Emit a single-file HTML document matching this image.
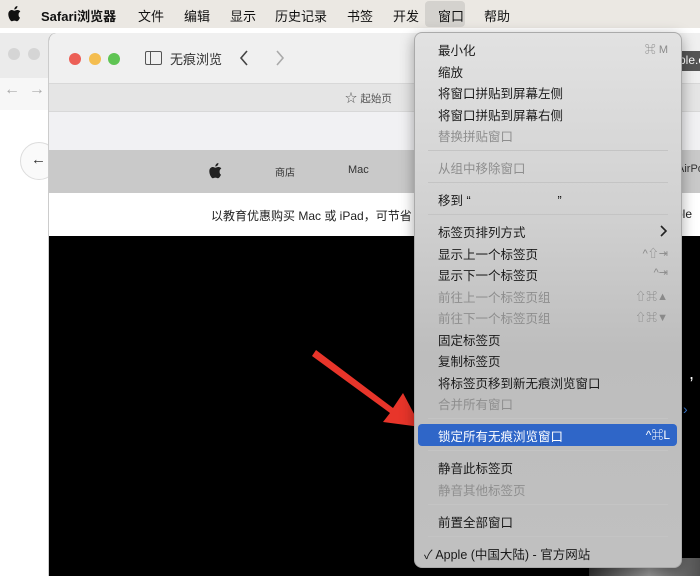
<!DOCTYPE html>
<html><head><meta charset="utf-8"><style>
*{margin:0;padding:0;box-sizing:border-box}
body{width:700px;height:576px;overflow:hidden;position:relative;background:#fff;font-family:"Liberation Sans","Noto Sans CJK SC",sans-serif;}
.abs{position:absolute}
#mb{left:0;top:0;width:700px;height:28px;background:#ebe8e3;font-size:13px;color:#111}
#mb span{position:absolute;top:6px}
.item{position:absolute;left:438px;font-size:12.5px;color:#1a1a1a;white-space:nowrap}
.dis{color:#8e8e8e}
.sc{position:absolute;right:32px;font-size:11px;color:#8a8a8a;white-space:nowrap;text-align:right}
.sep{position:absolute;left:428px;width:240px;height:1px;background:#c4c4c4}
</style></head><body>
<div id="mb" class="abs">
<svg class="abs" style="left:8px;top:6px" width="13" height="16" viewBox="0 0 13 16"><path d="M10.6 8.5c0-2 1.6-2.9 1.7-3-.9-1.4-2.4-1.5-2.9-1.5-1.2-.1-2.4.7-3 .7s-1.6-.7-2.6-.7C2.4 4 .3 5.2.3 8.2c0 2.9 2 7 3.6 7 .8 0 1.3-.6 2.5-.6s1.5.6 2.5.6c1.6 0 2.9-3 3.1-3.6-1.3-.5-1.4-2.1-1.4-3.1zM8.6 2.4C9.2 1.7 9.5.8 9.4 0c-.8 0-1.8.6-2.3 1.2-.5.6-.9 1.5-.8 2.3.9.1 1.8-.4 2.3-1.1z" fill="#111"/></svg>
<span style="left:41px;font-weight:bold">Safari浏览器</span>
<span style="left:138px">文件</span><span style="left:184px">编辑</span><span style="left:230px">显示</span>
<span style="left:275px">历史记录</span><span style="left:347px">书签</span><span style="left:393px">开发</span>
<div class="abs" style="left:425px;top:1px;width:40px;height:26px;background:#d4d2ce;border-radius:4px"></div>
<span style="left:438px">窗口</span><span style="left:484px">帮助</span>
</div>
<!-- back window -->
<div class="abs" style="left:0;top:33px;width:60px;height:45px;background:#ebebeb"></div>
<div class="abs" style="left:8px;top:48px;width:12px;height:12px;border-radius:6px;background:#d5d5d5"></div>
<div class="abs" style="left:28px;top:48px;width:12px;height:12px;border-radius:6px;background:#d5d5d5"></div>
<div class="abs" style="left:0;top:78px;width:60px;height:32px;background:#f7f7f7;color:#aaa;font-size:16px;padding:3px 4px">← &nbsp;→</div>
<div class="abs" style="left:20px;top:142px;width:38px;height:38px;border-radius:19px;border:1px solid #ddd;background:#fafafa;font-size:15px;padding:8px 10px;color:#333">←</div>
<!-- private window -->
<div class="abs" style="left:48px;top:33px;width:660px;height:543px;background:#000;border-radius:8px 8px 0 0;overflow:hidden;border-left:1px solid #ccc">
 <div class="abs" style="left:0;top:0;width:660px;height:50px;background:#f0f0f0"></div>
 <div class="abs" style="left:20px;top:20px;width:12px;height:12px;border-radius:6px;background:#ec5f56"></div>
 <div class="abs" style="left:40px;top:20px;width:12px;height:12px;border-radius:6px;background:#f4bd4f"></div>
 <div class="abs" style="left:59px;top:20px;width:12px;height:12px;border-radius:6px;background:#5fc453"></div>
 <div class="abs" style="left:96px;top:18px;width:17px;height:14px;border:1.3px solid #555;border-radius:2px"><div style="position:absolute;left:4px;top:0;width:1px;height:12px;background:#555"></div></div>
 <div class="abs" style="left:121px;top:16px;font-size:13px;color:#333">无痕浏览</div>
 <svg class="abs" style="left:190px;top:17px" width="10" height="16"><path d="M8 1 L2 8 L8 15" stroke="#444" stroke-width="1.6" fill="none"/></svg>
 <svg class="abs" style="left:226px;top:17px" width="10" height="16"><path d="M2 1 L8 8 L2 15" stroke="#aaa" stroke-width="1.6" fill="none"/></svg>
 <div class="abs" style="left:0;top:50px;width:660px;height:29px;background:#e5e5e5;border-top:1px solid #d8d8d8;border-bottom:1px solid #d8d8d8"></div>
 <div class="abs" style="left:296px;top:56px;font-size:12px;color:#555">☆ <span style="font-size:10.5px">起始页</span></div>
 <div class="abs" style="left:0;top:79px;width:660px;height:38px;background:#f1f1f3"></div>
 <div class="abs" style="left:0;top:117px;width:660px;height:43px;background:#c9c9c9"></div>
 <svg class="abs" style="left:160px;top:130px" width="13" height="16" viewBox="0 0 13 16"><path d="M10.6 8.5c0-2 1.6-2.9 1.7-3-.9-1.4-2.4-1.5-2.9-1.5-1.2-.1-2.4.7-3 .7s-1.6-.7-2.6-.7C2.4 4 .3 5.2.3 8.2c0 2.9 2 7 3.6 7 .8 0 1.3-.6 2.5-.6s1.5.6 2.5.6c1.6 0 2.9-3 3.1-3.6-1.3-.5-1.4-2.1-1.4-3.1zM8.6 2.4C9.2 1.7 9.5.8 9.4 0c-.8 0-1.8.6-2.3 1.2-.5.6-.9 1.5-.8 2.3.9.1 1.8-.4 2.3-1.1z" fill="#222"/></svg>
 <div class="abs" style="left:226px;top:131px;font-size:10px;color:#333">商店</div>
 <div class="abs" style="left:299px;top:131px;font-size:11px;color:#333">Mac</div>
 <div class="abs" style="left:0;top:160px;width:660px;height:43px;background:#fff"></div>
 <div class="abs" style="left:162px;top:174px;font-size:12px;color:#222">以教育优惠购买 Mac 或 iPad，可节省</div>
 <div class="abs" style="left:627px;top:174px;font-size:12px;color:#222">ple</div>
 <div class="abs" style="left:627px;top:18px;width:40px;height:20px;background:#555;color:#fff;font-size:12px;padding:2px 3px">ple.c</div>
 <div class="abs" style="left:628px;top:130px;font-size:11px;color:#333">AirPo</div>
 <div class="abs" style="left:640px;top:330px;font-size:18px;color:#fff">,</div>
 <div class="abs" style="left:634px;top:368px;font-size:14px;color:#3a7bd5">›</div>
 <div class="abs" style="left:540px;top:525px;width:120px;height:18px;background:linear-gradient(90deg,#333,#999,#444)"></div>
</div>
<!-- arrow -->
<svg class="abs" style="left:0;top:0" width="700" height="576"><path d="M312 356 L316 350 L393 408 L403 393 L421 427 L383 422 L390 413 Z" fill="#e8352a"/></svg>
<!-- menu -->
<div class="abs" style="left:414px;top:32px;width:268px;height:536px;border-radius:8px;background:linear-gradient(#e2e2e2,#d0d0d0 35%,#bdbdbd 60%,#c0c0c0);border:1px solid #aaa;box-shadow:0 4px 14px rgba(0,0,0,.35)"></div>
<div class="abs" style="left:418px;top:424px;width:259px;height:22px;border-radius:4px;background:#2f66c8"></div>
<div class="item" style="top:40px">最小化</div><div class="sc" style="top:41px">⌘ M</div>
<div class="item" style="top:62px">缩放</div>
<div class="item" style="top:83px">将窗口拼贴到屏幕左侧</div>
<div class="item" style="top:105px">将窗口拼贴到屏幕右侧</div>
<div class="item dis" style="top:126px">替换拼贴窗口</div>
<div class="sep" style="top:150px"></div>
<div class="item dis" style="top:158px">从组中移除窗口</div>
<div class="sep" style="top:182px"></div>
<div class="item" style="top:190px">移到 “ &nbsp; &nbsp; &nbsp; &nbsp; &nbsp; &nbsp; &nbsp; &nbsp; &nbsp; &nbsp; &nbsp; &nbsp; ”</div>
<div class="sep" style="top:214px"></div>
<div class="item" style="top:222px">标签页排列方式</div>
<svg class="abs" style="left:660px;top:225px" width="8" height="12"><path d="M1 1 L6 6 L1 11" stroke="#222" stroke-width="1.6" fill="none"/></svg>
<div class="item" style="top:244px">显示上一个标签页</div><div class="sc" style="top:245px">^⇧⇥</div>
<div class="item" style="top:265px">显示下一个标签页</div><div class="sc" style="top:266px">^⇥</div>
<div class="item dis" style="top:287px">前往上一个标签页组</div><div class="sc" style="top:288px">⇧⌘▲</div>
<div class="item dis" style="top:308px">前往下一个标签页组</div><div class="sc" style="top:309px">⇧⌘▼</div>
<div class="item" style="top:330px">固定标签页</div>
<div class="item" style="top:351px">复制标签页</div>
<div class="item" style="top:373px">将标签页移到新无痕浏览窗口</div>
<div class="item dis" style="top:394px">合并所有窗口</div>
<div class="sep" style="top:418px"></div>
<div class="item" style="top:426px;color:#fff">锁定所有无痕浏览窗口</div><div class="sc" style="top:426px;color:#fff;font-size:12px;right:30px">^⌘L</div>
<div class="sep" style="top:450px"></div>
<div class="item" style="top:458px">静音此标签页</div>
<div class="item dis" style="top:480px">静音其他标签页</div>
<div class="sep" style="top:504px"></div>
<div class="item" style="top:512px">前置全部窗口</div>
<div class="sep" style="top:536px"></div>
<div class="item" style="top:544px;left:424px">✓ Apple (中国大陆) - 官方网站</div>
</body></html>
